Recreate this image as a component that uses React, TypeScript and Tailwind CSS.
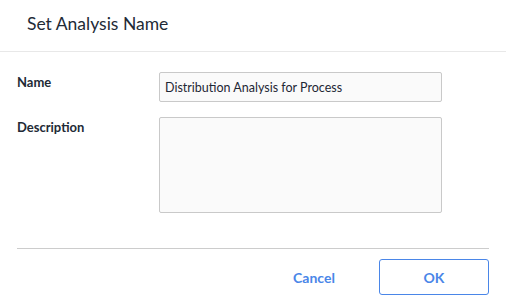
import React from 'react';

const font = { fontFamily: 'Lato, "Noto Sans", sans-serif' };

export default function App() {
  return (
    <div className="w-[506px] h-[303px] bg-white text-[#222a36]" style={font}>
      {/* Header */}
      <div className="h-[52px] border-b border-[#e8e8e8] pl-[27px] flex items-center">
        <h1 className="text-[17.5px] leading-none pb-[4px]">Set Analysis Name</h1>
      </div>

      {/* Form */}
      <div className="px-[17px] pt-[20px]">
        <div className="flex">
          <label className="w-[142px] pt-[1px] text-[13px] font-bold">Name</label>
          <input
            defaultValue="Distribution Analysis for Process"
            className="w-[283px] h-[30px] px-[5px] text-[12.5px] text-[#1e2735] bg-[#fafafa] border border-[#c9c9c9] rounded-[2px] outline-none"
          />
        </div>
        <div className="flex mt-[15px]">
          <label className="w-[142px] pt-[1px] text-[13px] font-bold">Description</label>
          <textarea className="w-[283px] h-[96px] bg-[#fafafa] border border-[#c9c9c9] rounded-[2px] outline-none resize-none" />
        </div>
      </div>

      {/* Footer */}
      <div className="mx-[17px] mt-[35px] border-t border-[#cccccc] pt-[10px] flex justify-end items-center">
        <button className="w-[110px] h-[36px] text-[14px] font-bold text-[#4a86e8]">Cancel</button>
        <button className="ml-[10px] w-[110px] h-[36px] text-[14px] font-bold text-[#4a86e8] border border-[#4a86e8] rounded-[3px]">
          OK
        </button>
      </div>
    </div>
  );
}
